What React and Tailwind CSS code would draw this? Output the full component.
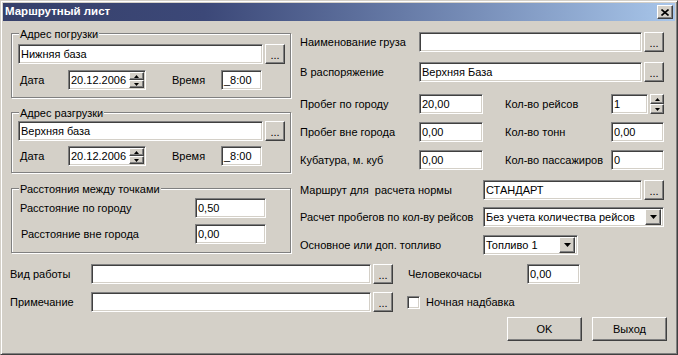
import React from "react";

const sunken =
  "bg-white border border-t-[#808080] border-l-[#808080] border-r-white border-b-white shadow-[inset_1px_1px_0_#404040,inset_-1px_-1px_0_#d4d0c8]";
const raised =
  "bg-[#d4d0c8] border border-t-white border-l-white border-r-[#404040] border-b-[#404040] shadow-[inset_-1px_-1px_0_#808080]";

function Field({ value = "", className = "", children }) {
  return (
    <div className={`${sunken} h-[20px] flex items-center overflow-hidden whitespace-nowrap ${className}`}>
      <span className="flex-1 pl-[2px] leading-none">{value}</span>
      {children}
    </div>
  );
}

function Dots() {
  return (
    <div className={`${raised} w-[20px] h-[20px] shrink-0 flex items-center justify-center leading-none pt-[3px]`}>
      ...
    </div>
  );
}

function Arrow({ down }) {
  return (
    <svg width="5" height="3" viewBox="0 0 5 3">
      <polygon points={down ? "0,0 5,0 2.5,3" : "0,3 5,3 2.5,0"} fill="#000" />
    </svg>
  );
}

// spin buttons stacked
function Spin({ className = "" }) {
  return (
    <div className={`flex flex-col shrink-0 ${className}`}>
      <div className={`${raised} h-1/2 flex items-center justify-center`}>
        <Arrow />
      </div>
      <div className={`${raised} h-1/2 flex items-center justify-center`}>
        <Arrow down />
      </div>
    </div>
  );
}

function DropBtn() {
  return (
    <div className={`${raised} w-[16px] h-[16px] mr-[2px] shrink-0 flex items-center justify-center`}>
      <svg width="7" height="4" viewBox="0 0 7 4">
        <polygon points="0,0 7,0 3.5,4" fill="#000" />
      </svg>
    </div>
  );
}

function Group({ title, className = "", children }) {
  return (
    <div className={`relative border border-[#808080] shadow-[inset_1px_1px_0_#fff,1px_1px_0_#fff] ${className}`}>
      <span className="absolute left-[7px] top-[-6px] bg-[#d4d0c8] px-px leading-[13px]">{title}</span>
      {children}
    </div>
  );
}

function AddressGroup({ title, value, className, rowGap }) {
  return (
    <Group title={title} className={className}>
      <div className="flex gap-[2px]">
        <Field value={value} className="w-[245px]" />
        <Dots />
      </div>
      <div className={`flex items-center h-[20px] ${rowGap}`}>
        <span className="w-[50px] pl-[2px]">Дата</span>
        <Field value="20.12.2006" className="w-[78px]">
          <Spin className="w-[15px] h-[16px] mr-[1px]" />
        </Field>
        <span className="ml-[26px] w-[49px]">Время</span>
        <Field value="_8:00" className="w-[41px]" />
      </div>
    </Group>
  );
}

function Row({ label, labelW, className = "", children }) {
  return (
    <div className={`flex items-center h-[20px] ${className}`}>
      <span className={`shrink-0 whitespace-nowrap ${labelW}`}>{label}</span>
      {children}
    </div>
  );
}

export default function App() {
  return (
    <div className="w-[678px] h-[355px] bg-[#d4d0c8] overflow-hidden border border-t-[#d4d0c8] border-l-[#d4d0c8] border-r-[#404040] border-b-[#404040] shadow-[inset_1px_1px_0_#fff,inset_-1px_-1px_0_#808080] px-[2px] pt-[2px] text-[11px] text-black font-['Liberation_Sans',Arial,sans-serif]">
      {/* заголовок */}
      <div className="h-[18px] flex items-center justify-between pl-[2px] pr-[2px] bg-linear-to-r from-[#36406a] via-[#3c4878] via-30% to-[#a8c6ea]">
        <span className="text-white font-bold text-[11.5px] leading-none">Маршрутный лист</span>
        <div className={`${raised} w-[16px] h-[14px] flex items-center justify-center`}>
          <svg width="8" height="7" viewBox="0 0 8 7">
            <path d="M0.5 0.5 L7.5 6.5 M7.5 0.5 L0.5 6.5" stroke="#000" strokeWidth="1.6" />
          </svg>
        </div>
      </div>

      <div className="pl-[8px]">
        <div className="flex items-start">
          {/* левая колонка */}
          <div className="w-[280px] mt-[12px] flex flex-col">
            <AddressGroup title="Адрес погрузки" value="Нижняя база" rowGap="mt-[6px]" className="h-[65px] pt-[10px] pl-[6px]" />
            <AddressGroup title="Адрес разгрузки" value="Верхняя база" rowGap="mt-[5px]" className="mt-[14px] h-[61px] pt-[8px] pl-[6px]" />
            <Group title="Расстояния между точками" className="mt-[15px] h-[65px] pt-[9px] pl-[6px]">
              <Row label="Расстояние по городу" labelW="w-[177px] pl-[2px]">
                <Field value="0,50" className="w-[71px]" />
              </Row>
              <Row label="Расстояние вне города" labelW="w-[177px] pl-[3px]" className="mt-[6px]">
                <Field value="0,00" className="w-[71px]" />
              </Row>
            </Group>
          </div>

          {/* правая колонка */}
          <div className="ml-[9px] mt-[11px] w-[364px] flex flex-col">
            <Row label="Наименование груза" labelW="w-[119px]">
              <Field className="w-[223px] mr-[2px]" />
              <Dots />
            </Row>
            <Row label="В распоряжение" labelW="w-[119px]" className="mt-[10px]">
              <Field value="Верхняя База" className="w-[223px] mr-[2px]" />
              <Dots />
            </Row>
            <Row label="Пробег по городу" labelW="w-[119px]" className="mt-[12px]">
              <Field value="20,00" className="w-[64px]" />
              <span className="ml-[22px] w-[106px]">Кол-во рейсов</span>
              <Field value="1" className="w-[37px]" />
              <Spin className="w-[14px] h-[20px] ml-[2px]" />
            </Row>
            <Row label="Пробег вне города" labelW="w-[119px]" className="mt-[8px]">
              <Field value="0,00" className="w-[64px]" />
              <span className="ml-[22px] w-[106px]">Кол-во тонн</span>
              <Field value="0,00" className="w-[53px]" />
            </Row>
            <Row label="Кубатура, м. куб" labelW="w-[119px]" className="mt-[8px]">
              <Field value="0,00" className="w-[64px]" />
              <span className="ml-[22px] w-[106px]">Кол-во пассажиров</span>
              <Field value="0" className="w-[53px]" />
            </Row>
            <Row label="Маршрут для  расчета нормы" labelW="w-[183px] whitespace-pre" className="mt-[10px]">
              <Field value="СТАНДАРТ" className="w-[159px] mr-[2px]" />
              <Dots />
            </Row>
            <Row label="Расчет пробегов по кол-ву рейсов" labelW="w-[183px]" className="mt-[7px]">
              <Field value="Без учета количества рейсов" className="w-[181px]">
                <DropBtn />
              </Field>
            </Row>
            <Row label="Основное или доп. топливо" labelW="w-[183px]" className="mt-[8px]">
              <Field value="Топливо 1" className="w-[95px]">
                <DropBtn />
              </Field>
            </Row>
          </div>
        </div>

        {/* нижняя часть */}
        <Row label="Вид работы" labelW="w-[80px] -ml-px" className="mt-[9px]">
          <Field className="w-[280px] mr-[2px] ml-px" />
          <Dots />
          <span className="ml-[15px] w-[119px]">Человекочасы</span>
          <Field value="0,00" className="w-[53px]" />
        </Row>
        <Row label="Примечание" labelW="w-[80px] -ml-px" className="mt-[8px]">
          <Field className="w-[280px] mr-[2px] ml-px" />
          <Dots />
          <div className={`${sunken} ml-[14px] w-[13px] h-[13px]`} />
          <span className="ml-[6px]">Ночная надбавка</span>
        </Row>
        <div className="flex mt-[5px] ml-[496px] gap-[10px]">
          <button className={`${raised} w-[75px] h-[24px] leading-none`}>OK</button>
          <button className={`${raised} w-[75px] h-[24px] leading-none`}>Выход</button>
        </div>
      </div>
    </div>
  );
}
